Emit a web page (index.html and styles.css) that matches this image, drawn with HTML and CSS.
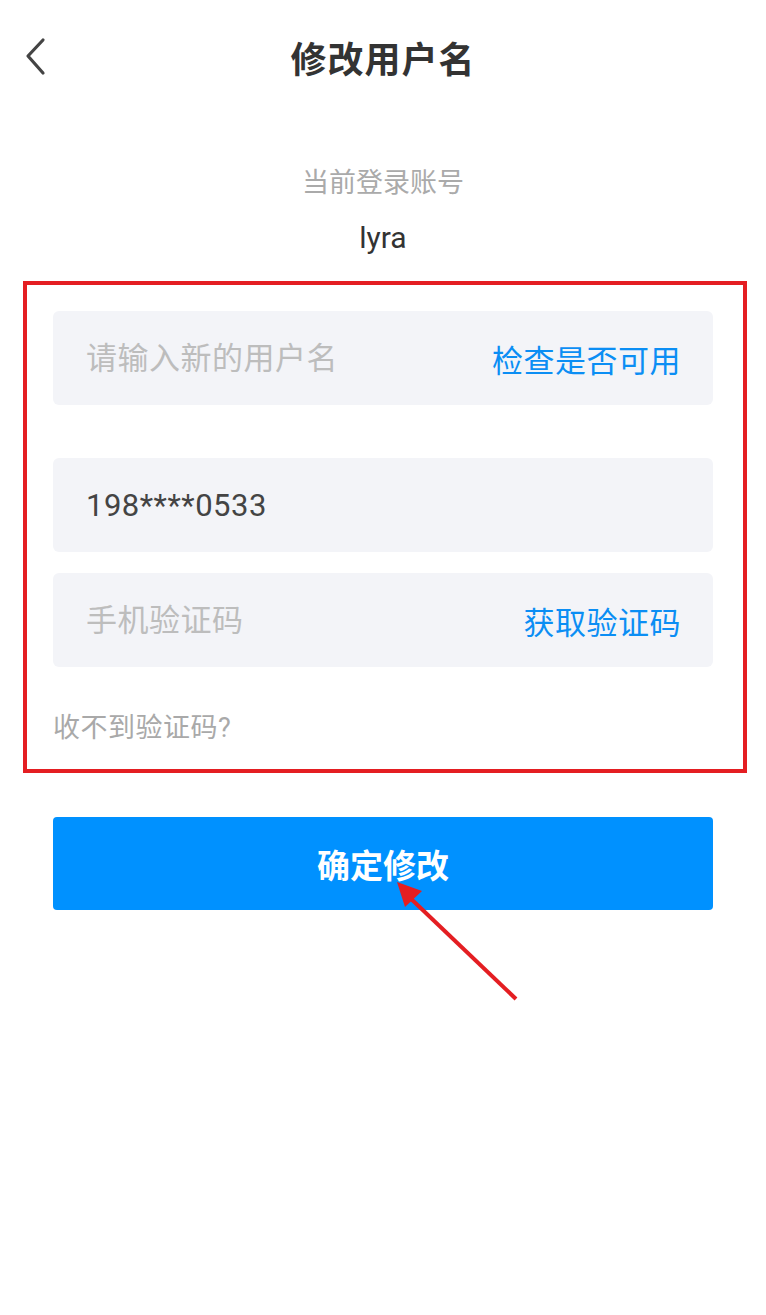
FILE: index.html
```html
<!DOCTYPE html>
<html>
  <head>
    <meta charset="utf-8">
    <link rel="stylesheet" href="styles.css">
  </head>

  <body>
    <div class="page">
      <div class="nav">
        <a class="back" href="#">
          <svg width="24" height="40" viewBox="0 0 24 40">
            <polyline points="19,3 4,19 19,36" fill="none" stroke="#444" stroke-width="3.2" stroke-linecap="round" stroke-linejoin="round" />
          </svg>
        </a>
        <h1>修改用户名</h1>
        <span></span>
      </div>

      <div class="account">
        <div class="account-label">当前登录账号</div>
        <div class="account-name">lyra</div>
      </div>

      <div class="form-box">
        <div class="field">
          <input type="text" placeholder="请输入新的用户名" />
          <a class="link" href="#">检查是否可用</a>
        </div>

        <div class="field field-phone">
          <span class="phone">198****0533</span>
        </div>

        <div class="field">
          <input type="text" placeholder="手机验证码" />
          <a class="link" href="#">获取验证码</a>
        </div>

        <div class="hint">收不到验证码?</div>
      </div>

      <button class="submit">确定修改</button>

      <!-- annotation arrow -->
      <svg class="arrow" width="766" height="1315" viewBox="0 0 766 1315">
        <line x1="516" y1="999" x2="407" y2="895" stroke="#e41e22" stroke-width="4" />
        <polygon points="397,882 422,891 405,907" fill="#e41e22" />
      </svg>
    </div>
  </body>
</html>
```

FILE: styles.css
```css
body {
  margin: 0;
  background-color: #fff;
  font-family: Roboto, "Noto Sans CJK SC", sans-serif;
}

.page {
  position: relative;
  width: 766px;
  height: 1315px;
}

.nav {
  height: 114px;
  display: grid;
  grid-template-columns: 1fr auto 1fr;
  align-items: center;
  padding-left: 24px;
  padding-right: 24px;
}

.back {
  display: flex;
  align-items: center;
}

.nav h1 {
  margin: 0;
  font-size: 36px;
  font-weight: bold;
  color: #333;
  letter-spacing: 1px;
}

.account {
  text-align: center;
  padding-top: 51px;
}

.account-label {
  font-size: 27px;
  line-height: 36px;
  color: #aaa;
}

.account-name {
  margin-top: 17px;
  font-size: 30px;
  line-height: 40px;
  color: #333;
}

.form-box {
  box-sizing: border-box;
  width: 724px;
  margin: 23px 0 0 23px;
  border: 4px solid #e41e22;
  padding: 26px 30px 23px 26px;
}

.field {
  box-sizing: border-box;
  height: 94px;
  display: flex;
  align-items: center;
  justify-content: space-between;
  padding: 0 32px 0 33px;
  background-color: #f3f4f8;
  border-radius: 6px;
}

.field + .field {
  margin-top: 21px;
}

.field.field-phone {
  margin-top: 53px;
}

.field input {
  flex: 1;
  min-width: 0;
  border: none;
  outline: none;
  background: transparent;
  padding: 0;
  font-family: inherit;
  font-size: 31px;
  letter-spacing: 0.5px;
  color: #444;
}

.field input::placeholder {
  color: #bdbdbd;
}

.phone {
  font-size: 31px;
  color: #444;
  letter-spacing: 0.5px;
}

.link {
  font-size: 31px;
  letter-spacing: 0.5px;
  color: #0b8ef4;
  text-decoration: none;
}

.hint {
  margin-top: 43px;
  font-size: 27px;
  line-height: 36px;
  letter-spacing: 0.5px;
  color: #a9a9a9;
}

.submit {
  display: block;
  width: 660px;
  height: 93px;
  margin: 44px 0 0 53px;
  border: none;
  border-radius: 4px;
  background-color: #0091ff;
  color: #fff;
  font-family: inherit;
  font-size: 33px;
  font-weight: bold;
  cursor: pointer;
}

.arrow {
  position: absolute;
  left: 0;
  top: 0;
  pointer-events: none;
}
```
